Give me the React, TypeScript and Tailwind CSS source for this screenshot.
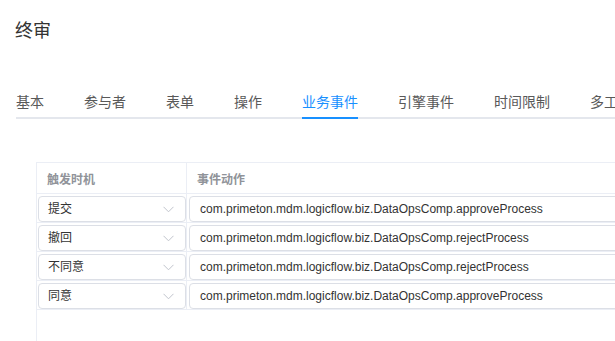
import React from "react";

const tabs = ["基本", "参与者", "表单", "操作", "业务事件", "引擎事件", "时间限制", "多工作项"];
const rows = [
  { t: "提交", a: "com.primeton.mdm.logicflow.biz.DataOpsComp.approveProcess" },
  { t: "撤回", a: "com.primeton.mdm.logicflow.biz.DataOpsComp.rejectProcess" },
  { t: "不同意", a: "com.primeton.mdm.logicflow.biz.DataOpsComp.rejectProcess" },
  { t: "同意", a: "com.primeton.mdm.logicflow.biz.DataOpsComp.approveProcess" },
];

const cjk = "font-['Liberation_Sans','Noto_Sans_CJK_SC',sans-serif]";

export default function App() {
  return (
    <div className={`w-[615px] h-[341px] overflow-hidden bg-white ${cjk}`}>
      <div className="pt-[22px] pl-[15px] h-[40px] text-[18px] leading-[18px] text-[#333]">终审</div>
      <div className="mt-[55px] ml-[16px] w-[800px] flex gap-[40px] border-b-2 border-[#e4e7ed] whitespace-nowrap">
        {tabs.map((t) => (
          <div
            key={t}
            className={
              t === "业务事件"
                ? "text-[14px] leading-[14px] pb-[8px] -mb-[2px] border-b-2 border-[#1890ff] text-[#1890ff]"
                : "text-[14px] leading-[14px] pb-[8px] text-[#595959]"
            }
          >
            {t}
          </div>
        ))}
      </div>
      <div className="ml-[36px] mt-[43px] w-[800px] h-[200px] border-t border-l border-[#ebeef5]">
        <div className="flex h-[31px] border-b border-[#ebeef5] text-[12px] font-bold text-[#909399]">
          <div className="w-[150px] border-r border-[#ebeef5] pl-[10px] pt-[3px] flex items-center">触发时机</div>
          <div className="flex-1 pl-[10px] pt-[3px] flex items-center">事件动作</div>
        </div>
        {rows.map((r, i) => (
          <div key={i} className="flex h-[29px] border-b border-[#ebeef5]">
            <div className="w-[150px] border-r border-[#ebeef5] pl-[1px] pt-[2px]">
              <div className="h-[26px] border border-[#dcdfe6] rounded-[4px] flex items-center justify-between pl-[9px] pr-[11px] text-[12px] text-[#333]">
                <span>{r.t}</span>
                <svg width="11" height="7" viewBox="0 0 11 7" fill="none">
                  <polyline points="0.5,0.8 5.5,5.8 10.5,0.8" stroke="#c0c4cc" strokeWidth="1" />
                </svg>
              </div>
            </div>
            <div className="flex-1 pl-[2px] pt-[2px]">
              <div className="h-[26px] border border-[#dcdfe6] rounded-[4px] flex items-center pl-[10px] text-[12px] text-[#333] font-['Liberation_Sans',Arial,sans-serif] whitespace-nowrap">
                {r.a}
              </div>
            </div>
          </div>
        ))}
      </div>
    </div>
  );
}
